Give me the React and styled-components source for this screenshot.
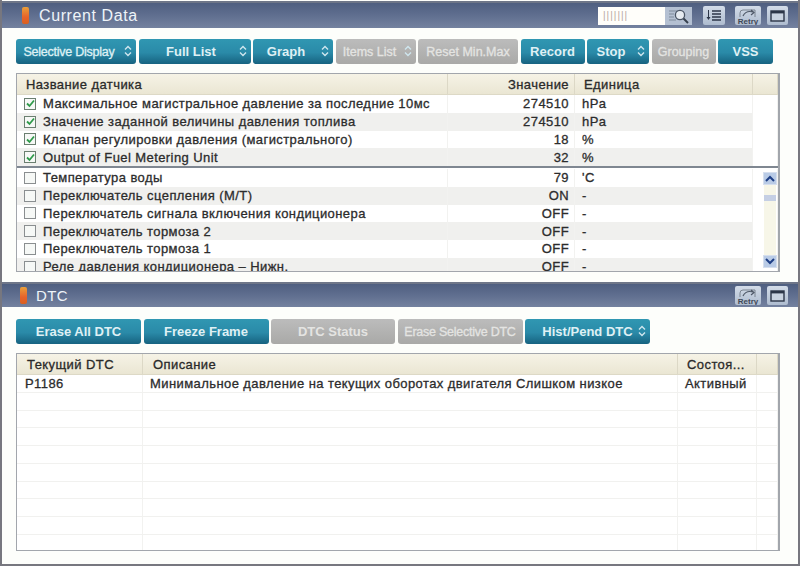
import React from 'react';
import styled, { createGlobalStyle } from 'styled-components';

const sensorsPinned = [
  ['Максимальное магистральное давление за последние 10мс', '274510', 'hPa'],
  ['Значение заданной величины давления топлива', '274510', 'hPa'],
  ['Клапан регулировки давления (магистрального)', '18', '%'],
  ['Output of Fuel Metering Unit', '32', '%'],
];

const sensors = [
  ['Температура воды', '79', "'C"],
  ['Переключатель сцепления (M/T)', 'ON', '-'],
  ['Переключатель сигнала включения кондиционера', 'OFF', '-'],
  ['Переключатель тормоза 2', 'OFF', '-'],
  ['Переключатель тормоза 1', 'OFF', '-'],
  ['Реле давления кондиционера – Нижн.', 'OFF', '-'],
];

const dataButtons = [
  { label: 'Selective Display', w: 120, arrows: true, small: true, tight: true, pr: 14 },
  { label: 'Full List', w: 112, arrows: true, pr: 7 },
  { label: 'Graph', w: 80, arrows: true, pr: 14 },
  { label: 'Items List', w: 80, arrows: true, off: true, small: true, pr: 12 },
  { label: 'Reset Min.Max', w: 100, off: true, small: true },
  { label: 'Record', w: 64 },
  { label: 'Stop', w: 62, arrows: true, pr: 14 },
  { label: 'Grouping', w: 64, off: true, small: true },
  { label: 'VSS', w: 55 },
];

const dtcButtons = [
  { label: 'Erase All DTC', w: 125 },
  { label: 'Freeze Frame', w: 125 },
  { label: 'DTC Status', w: 124, off: true },
  { label: 'Erase Selective DTC', w: 125, off: true, small: true, tight: true },
  { label: 'Hist/Pend DTC', w: 125, arrows: true },
];

const RetryIcon = () => (
  <IconBtn $w={26}>
    <svg width="24" height="18" viewBox="0 0 24 18">
      <path d="M4 10 V6 Q4 3 7 3 H19 V10" fill="none" stroke="#7b8490" strokeWidth="1" />
      <path d="M7 9 Q10 3 17 5 M15 3 L18 5.5 L15 8" fill="none" stroke="#4d5766" strokeWidth="1.2" />
      <text x="12" y="16.5" textAnchor="middle" fontSize="8" fontWeight="bold" fontFamily="Liberation Sans, sans-serif" fill="#3f4957">Retry</text>
    </svg>
  </IconBtn>
);

const WindowIcon = () => (
  <IconBtn $w={21}>
    <svg width="15" height="12" viewBox="0 0 15 12">
      <rect x="1" y="1" width="13" height="10" fill="#c9d3e0" stroke="#2c3648" strokeWidth="1.4" />
      <rect x="1" y="1" width="13" height="2.4" fill="#2c3648" />
    </svg>
  </IconBtn>
);

const ListIcon = () => (
  <IconBtn $w={22} $mr={4}>
    <svg width="16" height="14" viewBox="0 0 16 14">
      <path d="M6 2 H15 M6 5 H15 M6 8 H15 M6 11 H15" stroke="#2c3648" strokeWidth="1.5" />
      <path d="M2.5 1 V8" stroke="#2c3648" strokeWidth="1" />
      <path d="M0.5 8 H4.5 L2.5 11 Z" fill="#2c3648" />
    </svg>
  </IconBtn>
);

const ZoomIcon = () => (
  <svg width="24" height="18" viewBox="0 0 24 18">
    <path d="M2 4 H14 M2 7 H7 M2 10 H7 M2 13 H9" stroke="#7f8b9b" strokeWidth="1" />
    <circle cx="13" cy="8" r="4.6" fill="#e6ebf1" stroke="#4a5565" strokeWidth="1.3" />
    <path d="M16.5 11.5 L21 16" stroke="#36404e" strokeWidth="2" />
  </svg>
);

const Arrows = () => (
  <ArrowBox>
    <svg width="8" height="12" viewBox="0 0 8 12">
      <path d="M1 4.5 L4 1.5 L7 4.5 M1 7.5 L4 10.5 L7 7.5" fill="none" stroke="#cfe6ee" strokeWidth="1.4" />
    </svg>
  </ArrowBox>
);

const Buttons = ({ items }) => (
  <Toolbar>
    {items.map((b) => (
      <Btn key={b.label} $w={b.w} $off={b.off} $small={b.small} $tight={b.tight} $pr={b.pr}>
        <span>{b.label}</span>
        {b.arrows && <Arrows />}
      </Btn>
    ))}
  </Toolbar>
);

const sensorCols = '431px 127px 178px 1fr';
const dtcCols = '126px 535px 79px 1fr';

const SensorRow = ({ row, checked, odd }) => (
  <Row $odd={odd} $cols={sensorCols}>
    <NameCell>
      <Check $on={checked}>
        {checked && (
          <svg width="9" height="9" viewBox="0 0 9 9">
            <path d="M1 4.5 L3.5 7 L8 1.5" fill="none" stroke="#2f9a4a" strokeWidth="1.8" />
          </svg>
        )}
      </Check>
      {row[0]}
    </NameCell>
    <ValueCell>{row[1]}</ValueCell>
    <Cell $pad={7}>{row[2]}</Cell>
    <LastCell />
  </Row>
);

const App = () => (
  <Page>
    <GlobalStyle />
    <Panel>
      <TitleBar $h={25}>
        <Marker />
        <Title>Current Data</Title>
        <Tools>
          <SearchBox>
            <Ticks>|||||||</Ticks>
            <SearchBtn><ZoomIcon /></SearchBtn>
          </SearchBox>
          <ListIcon />
          <RetryIcon />
          <WindowIcon />
        </Tools>
      </TitleBar>
      <Body $h={254} $top={11}>
        <Buttons items={dataButtons} />
        <Table $h={199}>
          <Head $cols={sensorCols}>
            <HeadCell $pad={9}>Название датчика</HeadCell>
            <HeadCell $right>Значение</HeadCell>
            <HeadCell $pad={9}>Единица</HeadCell>
            <HeadCell />
          </Head>
          <Pinned>
            {sensorsPinned.map((r, i) => (
              <SensorRow key={r[0]} row={r} checked odd={i % 2 === 1} />
            ))}
          </Pinned>
          <Scroller>
            <ScrollRows>
              {sensors.map((r, i) => (
                <SensorRow key={r[0]} row={r} odd={i % 2 === 1} />
              ))}
            </ScrollRows>
            <ScrollBar>
              <ScrollBtn>
                <svg width="10" height="7" viewBox="0 0 10 7"><path d="M1 6 L5 2 L9 6" fill="none" stroke="#1f3f86" strokeWidth="2" /></svg>
              </ScrollBtn>
              <Track><Thumb /></Track>
              <ScrollBtn>
                <svg width="10" height="7" viewBox="0 0 10 7"><path d="M1 1 L5 5 L9 1" fill="none" stroke="#1f3f86" strokeWidth="2" /></svg>
              </ScrollBtn>
            </ScrollBar>
          </Scroller>
        </Table>
      </Body>
    </Panel>
    <Panel>
      <TitleBar $h={23}>
        <Marker $dtc />
        <Title $small>DTC</Title>
        <Tools>
          <RetryIcon />
          <WindowIcon />
        </Tools>
      </TitleBar>
      <Body $h={257} $top={12}>
        <Buttons items={dtcButtons} />
        <Table $h={198}>
          <Head $cols={dtcCols}>
            <HeadCell $pad={10}>Текущий DTC</HeadCell>
            <HeadCell $pad={10}>Описание</HeadCell>
            <HeadCell $pad={9}>Состоя...</HeadCell>
            <HeadCell />
          </Head>
          <Row $cols={dtcCols} $line>
            <Cell $pad={8}>P1186</Cell>
            <Cell $pad={7}>Минимальное давление на текущих оборотах двигателя Слишком низкое</Cell>
            <Cell $pad={7}>Активный</Cell>
            <Cell />
          </Row>
          {[0, 1, 2, 3, 4, 5, 6, 7, 8].map((n) => (
            <Row key={n} $cols={dtcCols} $line>
              <Cell /><Cell /><Cell /><Cell />
            </Row>
          ))}
        </Table>
      </Body>
    </Panel>
  </Page>
);

export default App;

const GlobalStyle = createGlobalStyle`
  html, body {
    margin: 0;
    background: #fff;
    overflow: hidden;
  }
`;

const Page = styled.div`
  width: 800px;
  height: 566px;
  box-sizing: border-box;
  padding-top: 1px;
  border-left: 2px solid #77777f;
  border-right: 2px solid #77777f;
  border-bottom: 2px solid #77777f;
  background: #fdfefb;
  font-family: "Liberation Sans", Arial, sans-serif;
  color: #222;
  overflow: hidden;
`;

const Panel = styled.section`
  display: flex;
  flex-direction: column;
`;

const TitleBar = styled.div`
  height: ${(p) => p.$h}px;
  flex: none;
  display: flex;
  align-items: center;
  border-top: 2px solid #6e7688;
  background: linear-gradient(180deg, #4f5f80 0%, #5e6d8e 45%, #74829f 100%);
`;

const Marker = styled.div`
  width: 7px;
  height: 17px;
  margin-left: ${(p) => (p.$dtc ? '18px' : '20px')};
  border-radius: 2px;
  background: linear-gradient(180deg, #e9a03a, #e8622a 60%, #d9601f);
`;

const Title = styled.h2`
  margin: 0 0 0 ${(p) => (p.$small ? '9px' : '10px')};
  font-size: ${(p) => (p.$small ? '15px' : '16px')};
  font-weight: normal;
  color: #eef4f9;
  letter-spacing: ${(p) => (p.$small ? '0.4px' : '0.6px')};
`;

const Tools = styled.div`
  margin-left: auto;
  margin-right: 10px;
  display: flex;
  align-items: center;
  gap: 6px;
`;

const SearchBox = styled.div`
  display: flex;
  align-items: center;
  height: 18px;
  width: 94px;
  margin-right: 5px;
  background: #fffefa;
`;

const Ticks = styled.span`
  flex: 1;
  padding-left: 5px;
  font-size: 10px;
  color: #b8a9a0;
  letter-spacing: 1px;
`;

const SearchBtn = styled.div`
  width: 27px;
  height: 18px;
  display: flex;
  align-items: center;
  justify-content: center;
  background: #b4c0d2;
`;

const IconBtn = styled.div`
  width: ${(p) => p.$w}px;
  height: 19px;
  margin-right: ${(p) => p.$mr || 0}px;
  display: flex;
  align-items: center;
  justify-content: center;
  border-radius: 2px;
  background: linear-gradient(180deg, #d3dce8, #aebccf);
  box-sizing: border-box;
`;

const Body = styled.div`
  height: ${(p) => p.$h}px;
  flex: none;
  box-sizing: border-box;
  padding: ${(p) => p.$top}px 18px 0 14px;
  display: flex;
  flex-direction: column;
  gap: 9px;
`;

const Toolbar = styled.div`
  display: flex;
  gap: 2.5px;
`;

const Btn = styled.button`
  width: ${(p) => p.$w}px;
  height: 25px;
  flex: none;
  padding: 0 ${(p) => p.$pr || 0}px 0 0;
  display: flex;
  align-items: center;
  justify-content: center;
  position: relative;
  border: none;
  border-radius: 3px;
  font-family: inherit;
  font-size: ${(p) => (p.$small ? '12.5px' : '13px')};
  font-weight: ${(p) => (p.$small ? 'normal' : 'bold')};
  letter-spacing: ${(p) => (p.$tight ? '-0.25px' : '0')};
  -webkit-text-stroke: ${(p) => (p.$small ? '0.3px' : '0')};
  color: ${(p) => (p.$off ? '#e4e4e2' : '#dff0f4')};
  background: ${(p) =>
    p.$off
      ? 'linear-gradient(180deg, #bcbcbc, #a9a9a7)'
      : 'linear-gradient(180deg, #3097b2 0%, #2a8aa8 55%, #16627f 100%)'};
`;

const ArrowBox = styled.span`
  display: flex;
  position: absolute;
  right: 4px;
  top: 6px;
`;

const Table = styled.div`
  height: ${(p) => p.$h}px;
  flex: none;
  display: flex;
  flex-direction: column;
  overflow: hidden;
  border: 1px solid #a2a6ac;
  border-right-width: 2px;
  box-sizing: border-box;
  background: #fff;
`;

const Head = styled.div`
  flex: none;
  display: grid;
  grid-template-columns: ${(p) => p.$cols};
  height: 21px;
  box-sizing: border-box;
  background: linear-gradient(180deg, #f6f3e6, #eae6d3);
  border-bottom: 1px solid #ddd9c6;
`;

const HeadCell = styled.div`
  display: flex;
  align-items: center;
  justify-content: ${(p) => (p.$right ? 'flex-end' : 'flex-start')};
  padding: ${(p) => (p.$right ? '0 5px 0 0' : `0 0 0 ${p.$pad || 0}px`)};
  border-right: 1px solid #dcd8c6;
  font-size: 13px;
  -webkit-text-stroke: 0.3px;
  color: #2a2a2a;
  white-space: nowrap;
  letter-spacing: 0.42px;
`;

const Pinned = styled.div`
  flex: none;
  border-bottom: 2px solid #7f8791;
  height: 71px;
  overflow: hidden;
`;

const Scroller = styled.div`
  flex: 1;
  min-height: 0;
  display: flex;
  overflow: hidden;
  padding-top: 1px;
`;

const ScrollRows = styled.div`
  flex: 1;
  min-width: 0;
  overflow: hidden;
`;

const ScrollBar = styled.div`
  flex: none;
  width: 16px;
  margin-left: -16px;
  padding: 3px 1px 3px;
  box-sizing: border-box;
  display: flex;
  flex-direction: column;
  position: relative;
`;

const ScrollBtn = styled.div`
  height: 13px;
  flex: none;
  display: flex;
  align-items: center;
  justify-content: center;
  background: #b9cbe6;
  border: 1px solid #d6dfee;
  box-sizing: border-box;
`;

const Track = styled.div`
  flex: 1;
  background: #f7f6e8;
  padding-top: 10px;
  margin: 0 1px;
`;

const Thumb = styled.div`
  height: 6px;
  background: #c5cfe4;
`;

const Row = styled.div`
  display: grid;
  grid-template-columns: ${(p) => p.$cols};
  height: 17.75px;
  flex: none;
  background: ${(p) => (p.$odd ? '#f0f0ee' : '#fff')};
  border-bottom: ${(p) => (p.$line ? '1px solid #f1f1ef' : 'none')};
  box-sizing: border-box;
`;

const Cell = styled.div`
  display: flex;
  align-items: center;
  padding-left: ${(p) => p.$pad || 0}px;
  border-right: 1px solid #f2f2f0;
  font-size: 13px;
  -webkit-text-stroke: 0.3px;
  color: #2c2c2c;
  white-space: nowrap;
  letter-spacing: 0.42px;
  overflow: hidden;
`;

const LastCell = styled(Cell)`
  background: #fff;
`;

const NameCell = styled(Cell)`
  padding-left: 7px;
`;

const ValueCell = styled(Cell)`
  justify-content: flex-end;
  padding-right: 5px;
`;

const Check = styled.span`
  width: 12px;
  height: 12px;
  margin-right: 7px;
  flex: none;
  display: flex;
  align-items: center;
  justify-content: center;
  box-sizing: border-box;
  border: 1px solid ${(p) => (p.$on ? '#6b7f70' : '#8a8e90')};
  background: #f6f8f6;
`;
